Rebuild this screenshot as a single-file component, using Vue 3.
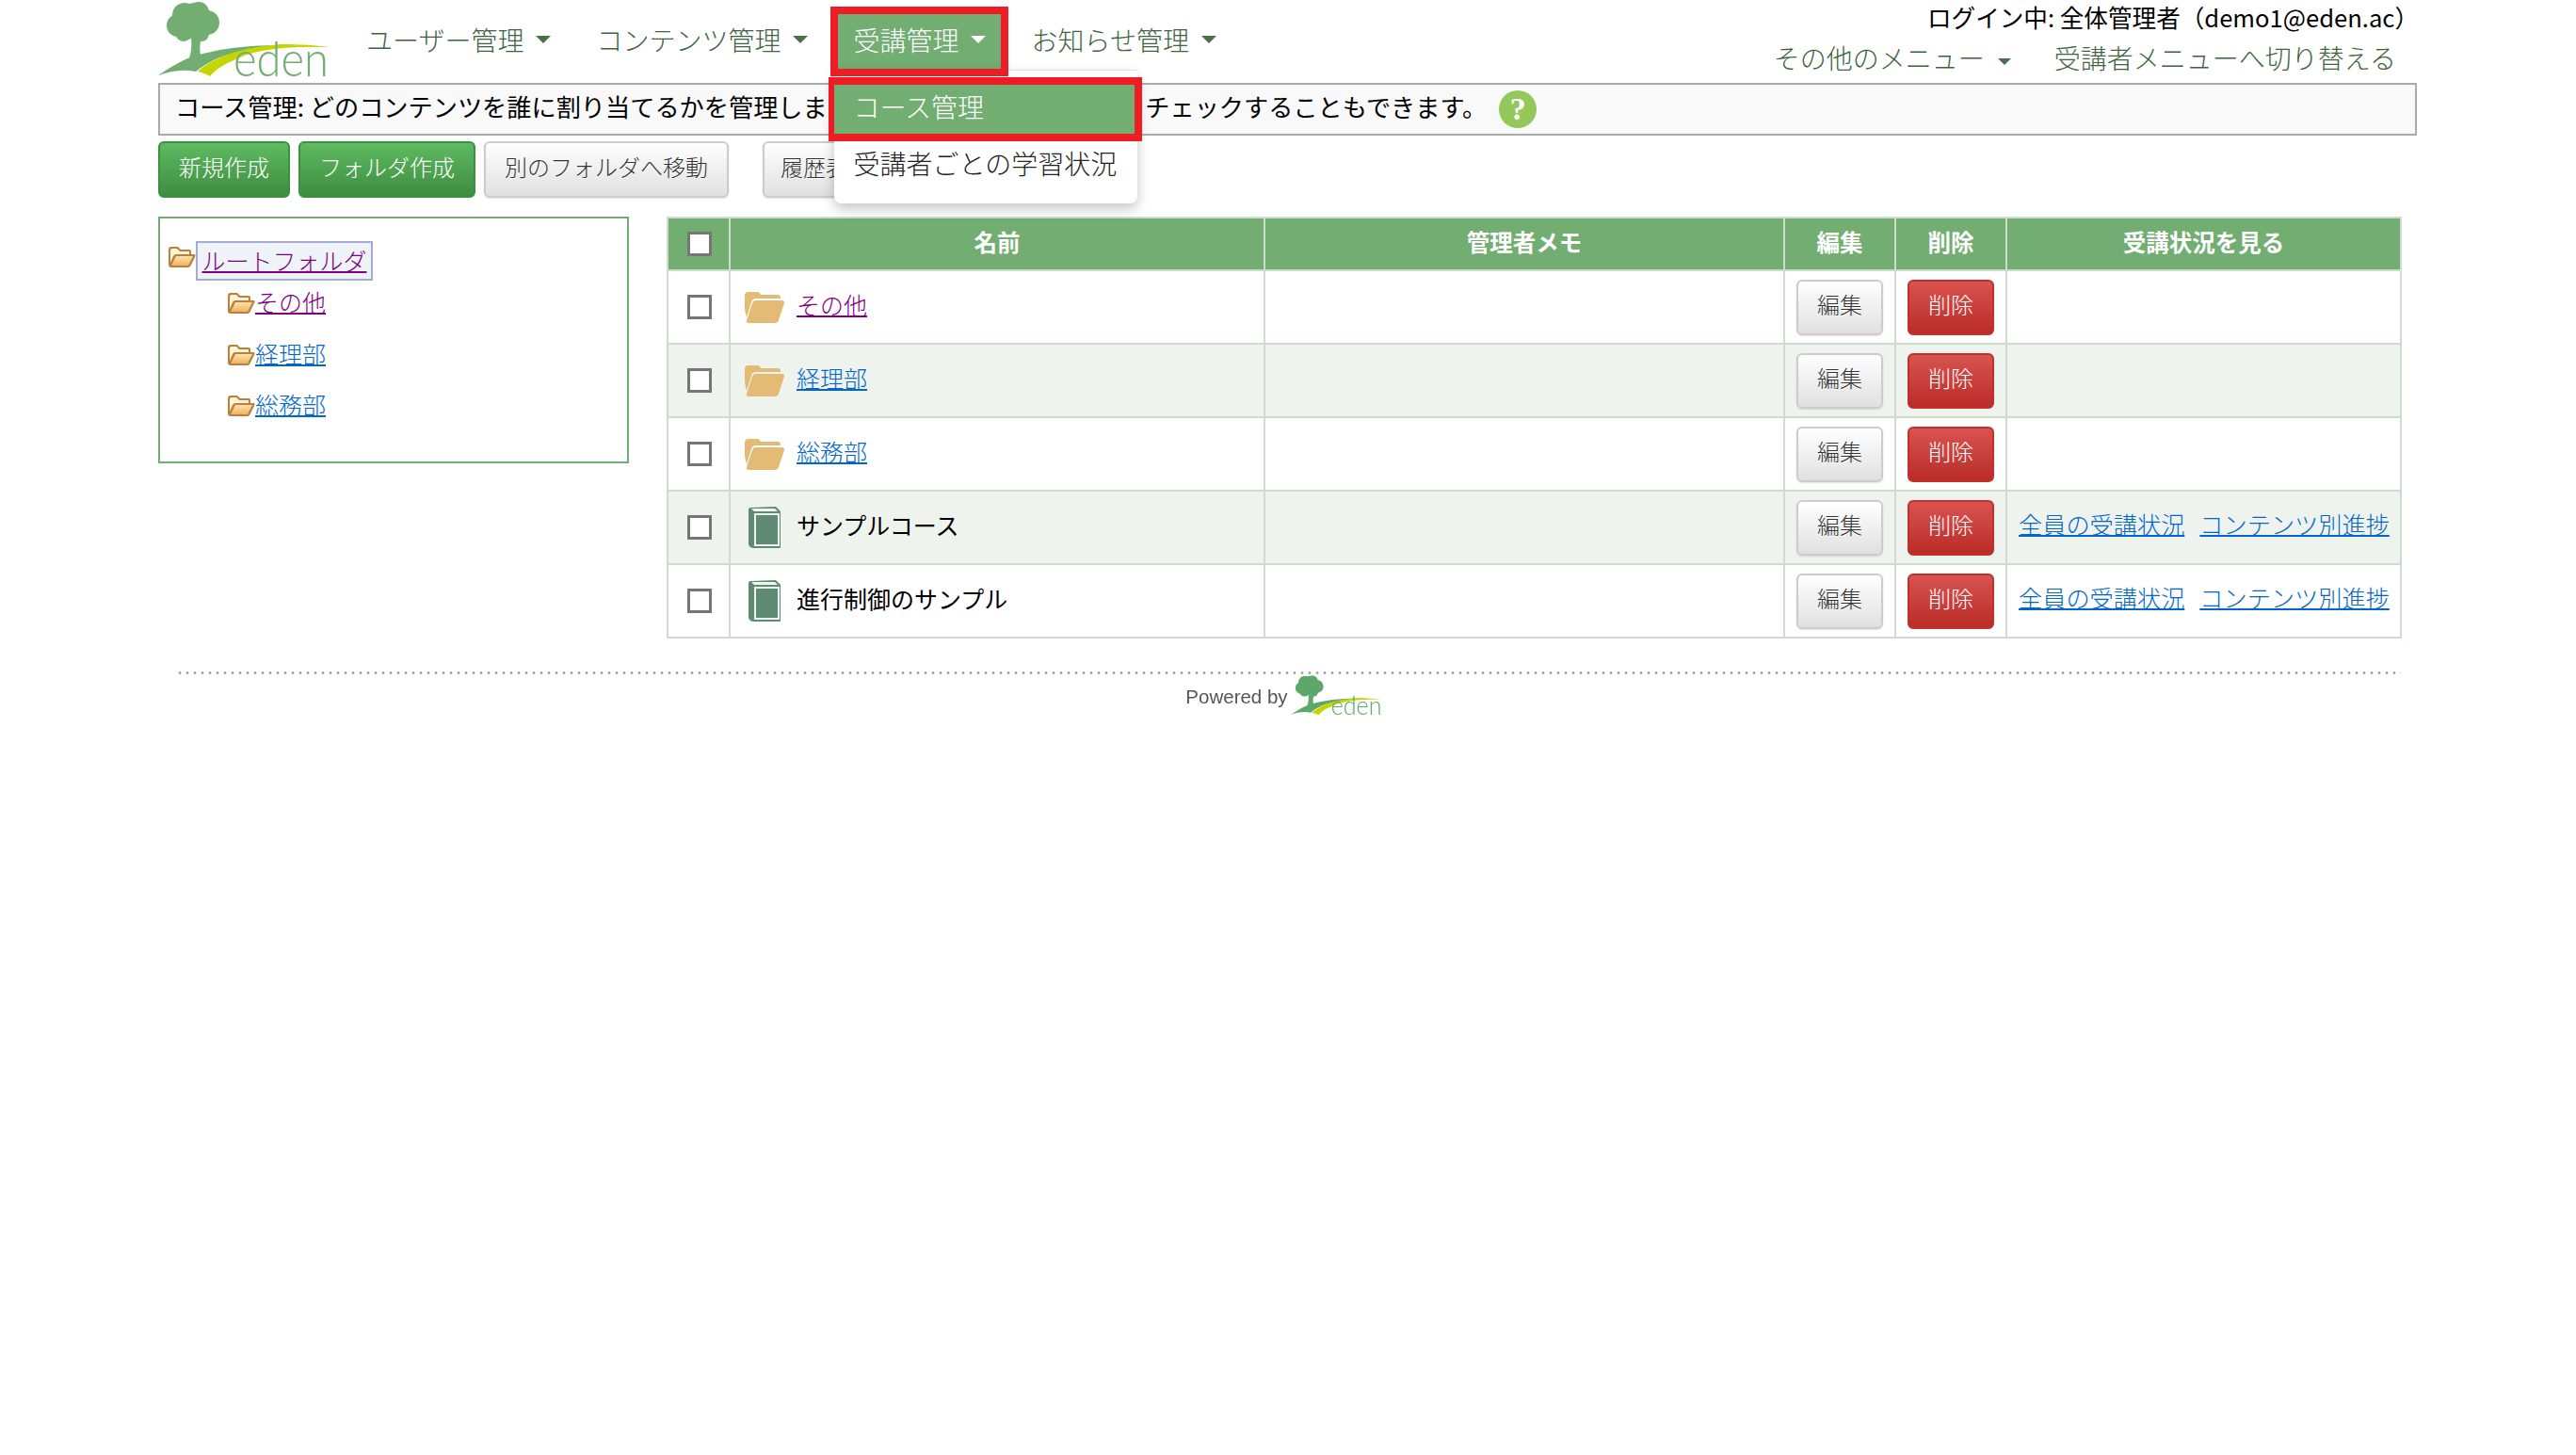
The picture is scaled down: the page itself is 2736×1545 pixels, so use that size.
<script setup>
const navItems = [
  { label: 'ユーザー管理' },
  { label: 'コンテンツ管理' },
  { label: '受講管理', active: true },
  { label: 'お知らせ管理' },
]
const tools = [
  { label: '新規作成', kind: 'green' },
  { label: 'フォルダ作成', kind: 'green' },
  { label: '別のフォルダへ移動', kind: 'gray' },
  { label: '履歴表示', kind: 'gray', far: true },
]
const treeItems = [
  { label: 'その他', visited: true },
  { label: '経理部' },
  { label: '総務部' },
]
const rows = [
  { name: 'その他', type: 'folder', visited: true },
  { name: '経理部', type: 'folder' },
  { name: '総務部', type: 'folder' },
  { name: 'サンプルコース', type: 'course' },
  { name: '進行制御のサンプル', type: 'course' },
]
</script>

<template>
  <div class="page">
    <svg width="0" height="0" class="defs" aria-hidden="true">
      <defs>
        <linearGradient id="tf" x1="0" y1="0" x2="0" y2="1">
          <stop offset="0" stop-color="#ffe3a8" />
          <stop offset="1" stop-color="#eeb264" />
        </linearGradient>
        <symbol id="eden-logo" viewBox="0 0 182 82">
          <g fill="currentColor">
            <circle cx="28" cy="16" r="13" /><circle cx="43" cy="13" r="11" /><circle cx="52" cy="24" r="13" />
            <circle cx="21" cy="27" r="12" /><circle cx="35" cy="26" r="15" /><circle cx="27" cy="35" r="9" />
            <circle cx="46" cy="36" r="8" /><circle cx="37" cy="9" r="6" />
            <path d="M35 40 H46 C44 46 44 52 45 60 L52 58 L30 68 C35 60 36 50 35 40Z" />
            <path d="M0 80 C18 68 30 62 37 60 C70 50 110 45 182 50 C130 47 80 52 55 66 C48 70 42 74 40 76 C25 73 12 76 0 80Z" />
          </g>
          <path fill="#c4d500" d="M42 76 C60 60 90 50 130 47 C150 47 170 48 180 50 C140 49 105 52 85 62 C70 68 60 74 55 81 C50 78 46 77 42 76Z" />
          <text x="80" y="81" class="logo-text" textLength="101" lengthAdjust="spacingAndGlyphs">eden</text>
        </symbol>
        <symbol id="tree-folder" viewBox="0 0 30 24">
          <path fill="#b9803f" d="M1 4 Q1 1 4 1 H11 L14 4 H23 Q25 4 25 6 V9 H29 Q30 10 29 12 L24 22 Q23 23 21 23 H4 Q1 23 1 20Z" />
          <path fill="#fff3d6" d="M3 5 Q3 3 5 3 H10 L13 6 H23 V9 H9 Q7 9 6 11 L3 18Z" />
          <path fill="url(#tf)" d="M9 11 H27 L22 21 H4Z" />
        </symbol>
        <symbol id="row-folder" viewBox="0 0 42 33">
          <path fill="#e3bb75" d="M0 4 Q0 0 4 0 H13 Q16 0 17 3 H35 Q38 3 38 6 V7 H12 Q8 7 7 11 L2 27 Q0 20 0 16Z" />
          <path fill="#e3bb75" d="M11 9 H40 Q42 9 42 12 L36 30 Q35 33 32 33 H4 Q1 33 2 30 L8 12 Q9 9 11 9Z" />
        </symbol>
        <symbol id="row-book" viewBox="0 0 34 44">
          <path fill="#5f8b74" d="M0 3 Q0 1 2 1 L29 0 L34 5 V43 Q34 44 33 44 H6 Q1 44 0 40Z" />
          <path fill="#eef3ee" d="M3 2 L28 2 L31 5 H6Z" />
          <rect x="7" y="8" width="25" height="33" fill="none" stroke="#eef3ee" stroke-width="2" />
        </symbol>
      </defs>
    </svg>

    <header class="header">
      <svg class="logo"><use href="#eden-logo" /></svg>
      <nav>
        <ul class="nav">
          <li v-for="item in navItems" :key="item.label" class="nav-item" :class="{ active: item.active }">
            {{ item.label }}<span class="caret"></span>
            <div v-if="item.active" class="dropdown">
              <div class="drop-item selected">コース管理</div>
              <div class="drop-item">受講者ごとの学習状況</div>
            </div>
          </li>
        </ul>
      </nav>
      <div class="account">
        <div class="login">ログイン中: 全体管理者（demo1@eden.ac）</div>
        <div class="account-links">
          <span>その他のメニュー<span class="caret small"></span></span>
          <span>受講者メニューへ切り替える</span>
        </div>
      </div>
    </header>

    <div class="info">
      <span class="info-text">コース管理: どのコンテンツを誰に割り当てるかを管理します。受講者ごとの学習状況をチェックすることもできます。</span>
      <span class="help">?</span>
    </div>

    <div class="toolbar">
      <button v-for="t in tools" :key="t.label" class="btn" :class="[t.kind, { far: t.far }]">{{ t.label }}</button>
    </div>

    <main class="main">
      <aside class="tree">
        <div class="tree-root">
          <svg class="tree-icon"><use href="#tree-folder" /></svg>
          <span class="root-label"><a href="#" class="visited">ルートフォルダ</a></span>
        </div>
        <ul class="tree-list">
          <li v-for="t in treeItems" :key="t.label">
            <svg class="tree-icon"><use href="#tree-folder" /></svg>
            <a href="#" :class="{ visited: t.visited }">{{ t.label }}</a>
          </li>
        </ul>
      </aside>

      <table class="grid">
        <colgroup>
          <col style="width:66px" /><col style="width:568px" /><col style="width:552px" />
          <col style="width:118px" /><col style="width:118px" /><col style="width:419px" />
        </colgroup>
        <thead>
          <tr>
            <th class="check-cell"><input type="checkbox" class="check" /></th>
            <th><span class="th-label">名前</span></th>
            <th><span class="th-label">管理者メモ</span></th>
            <th><span class="th-label">編集</span></th>
            <th><span class="th-label">削除</span></th>
            <th><span class="th-label">受講状況を見る</span></th>
          </tr>
        </thead>
        <tbody>
          <tr v-for="r in rows" :key="r.name">
            <td class="check-cell"><input type="checkbox" class="check" /></td>
            <td>
              <div class="name">
                <span class="icon-slot">
                  <svg v-if="r.type === 'folder'" class="row-folder"><use href="#row-folder" /></svg>
                  <svg v-else class="row-book"><use href="#row-book" /></svg>
                </span>
                <a v-if="r.type === 'folder'" href="#" class="lift" :class="{ visited: r.visited }">{{ r.name }}</a>
                <span v-else class="lift plain">{{ r.name }}</span>
              </div>
            </td>
            <td></td>
            <td><button class="btn gray small-btn">編集</button></td>
            <td><button class="btn red small-btn">削除</button></td>
            <td>
              <div v-if="r.type === 'course'" class="status">
                <a href="#" class="lift">全員の受講状況</a>
                <a href="#" class="lift">コンテンツ別進捗</a>
              </div>
            </td>
          </tr>
        </tbody>
      </table>
    </main>

    <footer class="footer">
      <div class="dots"></div>
      <div class="powered">
        <span class="powered-text">Powered by</span>
        <svg class="small-logo"><use href="#eden-logo" /></svg>
      </div>
    </footer>
  </div>
</template>

<style scoped>
.page {
  width: 2399px;
  margin-left: 168px;
  font-family: "Noto Sans CJK JP", "Noto Sans", sans-serif;
  font-weight: 300;
  color: #000;
}
.defs { position: absolute; }
.logo-text { font-family: Lato, sans-serif; font-weight: 300; font-size: 52px; fill: currentColor; }

.header { display: flex; height: 88px; position: relative; }
.logo { width: 182px; height: 82px; color: #72ad72; flex: none; }
.nav {
  list-style: none;
  display: flex;
  gap: 16px;
  margin: 15px 0 0 23px;
  padding: 0;
}
.nav-item {
  position: relative;
  box-sizing: border-box;
  height: 58px;
  padding: 0 16px 4px;
  display: flex;
  align-items: center;
  font-size: 28px;
  color: #3f643f;
  white-space: nowrap;
}
.caret {
  display: inline-block;
  margin-left: 13px;
  border-left: 8px solid transparent;
  border-right: 8px solid transparent;
  border-top: 8px solid #4a6f4a;
}
.caret.small { margin-left: 14px; vertical-align: middle; border-width: 7px 7.5px 0; }
.nav-item.active { background: #72ad72; color: #fff; }
.nav-item.active .caret { border-top-color: #fff; }
.nav-item.active::after {
  content: "";
  position: absolute;
  inset: -8px;
  border: 8px solid #ee1c25;
  pointer-events: none;
  z-index: 6;
}
.dropdown {
  position: absolute;
  left: -4px;
  top: 59px;
  width: 322px;
  height: 142px;
  box-sizing: border-box;
  padding: 15px 0 0;
  background: #fff;
  border-top: 1px solid #ddd;
  border-radius: 0 0 8px 8px;
  box-shadow: 0 6px 14px rgba(0, 0, 0, 0.22);
  color: #222;
  z-index: 5;
}
.drop-item {
  position: relative;
  box-sizing: border-box;
  height: 52px;
  padding: 0 0 6px 20px;
  display: flex;
  align-items: center;
}
.drop-item + .drop-item { margin-top: 8px; }
.drop-item.selected { width: 319px; background: #72ad72; color: #fff; }
.drop-item.selected::after {
  content: "";
  position: absolute;
  inset: -8px -8px -8px -6px;
  border-style: solid;
  border-color: #ee1c25;
  border-width: 8px 8px 8px 6px;
}
.account {
  margin-left: auto;
  margin-right: 14px;
  display: flex;
  flex-direction: column;
  align-items: flex-end;
  padding-top: 2px;
}
.login { font-size: 25.6px; font-weight: 400; line-height: 32px; white-space: nowrap; margin-right: -16px; }
.account-links {
  margin-top: 11px;
  padding-right: 8px;
  display: flex;
  gap: 46px;
  font-size: 28px;
  line-height: 32px;
  color: #3f643f;
  white-space: nowrap;
}

.info {
  height: 56px;
  box-sizing: border-box;
  border: 2px solid #aaa;
  background: #f9f9f9;
  display: flex;
  align-items: center;
  padding-left: 16px;
  font-size: 26.2px;
  font-weight: 400;
  white-space: nowrap;
}
.info-text { margin-bottom: 6px; }
.help {
  margin-left: 13px;
  width: 40px;
  height: 40px;
  border-radius: 50%;
  background: #94c85a;
  color: #fff;
  font: bold 34px/40px "Liberation Serif", serif;
  text-align: center;
}

.toolbar { display: flex; gap: 9px; margin-top: 6px; height: 60px; }
.btn {
  box-sizing: border-box;
  height: 60px;
  padding: 0 20px 7px;
  border-radius: 6px;
  border: 2px solid;
  font-family: inherit;
  font-weight: 300;
  font-size: 24px;
  white-space: nowrap;
}
.btn.far { margin-left: 27px; padding: 0 17px 7px; }
.btn.green {
  color: #fff;
  background: linear-gradient(#5fba62, #3d8d3f);
  border-color: #3f8f42;
}
.btn.gray {
  color: #333;
  background: linear-gradient(#fff, #e0e0e0);
  border-color: #ccc;
  text-shadow: 0 1px 0 #fff;
  box-shadow: 0 1px 2px rgba(0, 0, 0, 0.12);
}
.btn.red {
  color: #fff;
  background: linear-gradient(#d9534f, #b92c28);
  border-color: #c0302c;
}
.small-btn {
  display: block;
  margin: 0 auto;
  width: 92px;
  padding: 0 0 7px;
  height: 59px;
}

.main { display: flex; gap: 40px; margin-top: 20px; align-items: flex-start; }
.tree {
  width: 500px;
  height: 262px;
  box-sizing: border-box;
  flex: none;
  border: 2px solid #72ad72;
  padding: 24px 8px 0;
  font-size: 25px;
}
a { color: #0066cc; text-decoration-thickness: 2px; }
a.visited { color: #800080; }
.tree-root { display: flex; align-items: center; }
.tree-icon { width: 30px; height: 24px; flex: none; }
.tree-root .tree-icon { margin-top: -8px; }
.root-label {
  box-sizing: border-box;
  width: 188px;
  height: 42px;
  border: 2px solid #aaaad0;
  background: #eef3f7;
  display: flex;
  align-items: center;
  justify-content: center;
  padding-bottom: 3px;
}
.tree-list { list-style: none; margin: -3px 0 0; padding: 0 0 0 63px; }
.tree-list li { height: 54.5px; display: flex; align-items: center; }
.tree-list a { margin-bottom: 4px; }

.grid {
  width: 1843px;
  flex: none;
  table-layout: fixed;
  border-collapse: collapse;
  font-size: 25px;
}
.grid th, .grid td { border: 2px solid #cddccd; padding: 0; line-height: 1; }
.grid th {
  height: 54px;
  background: #72ad72;
  color: #fff;
  font-size: 24.5px;
  font-weight: 700;
}
.grid .check-cell { padding-left: 2px; }
.th-label { position: relative; top: -2px; }
.grid td { height: 76px; }
.grid tbody tr:nth-child(even) td { background: #eff3ee; }
.check {
  appearance: none;
  display: block;
  margin: 0 auto;
  width: 26px;
  height: 26px;
  box-sizing: border-box;
  border: 3px solid #767676;
  background: #fff;
}
.name { display: flex; align-items: center; padding-left: 14px; gap: 13px; white-space: nowrap; }
.icon-slot { width: 43px; display: flex; justify-content: center; }
.row-folder { width: 42px; height: 33px; }
.row-book { width: 34px; height: 44px; }
.lift { margin-bottom: 6px; }
.plain { font-weight: 400; }
.status { display: flex; gap: 16px; padding-left: 12px; white-space: nowrap; font-size: 25.2px; }

.footer { margin-top: 35px; padding: 0 17px 0 19px; }
.dots {
  height: 3px;
  background: radial-gradient(circle, #aaa 1.4px, transparent 1.6px) 0 0 / 8px 3px repeat-x;
}
.powered { display: flex; justify-content: center; align-items: center; gap: 3px; padding-right: 10px; }
.powered-text {
  font-family: "Liberation Sans", sans-serif;
  font-weight: 400;
  font-size: 20.5px;
  color: #555;
  padding-top: 4px;
  filter: blur(0.4px);
}
.small-logo { width: 97px; height: 44px; color: #5ca868; filter: blur(0.4px); }
</style>
